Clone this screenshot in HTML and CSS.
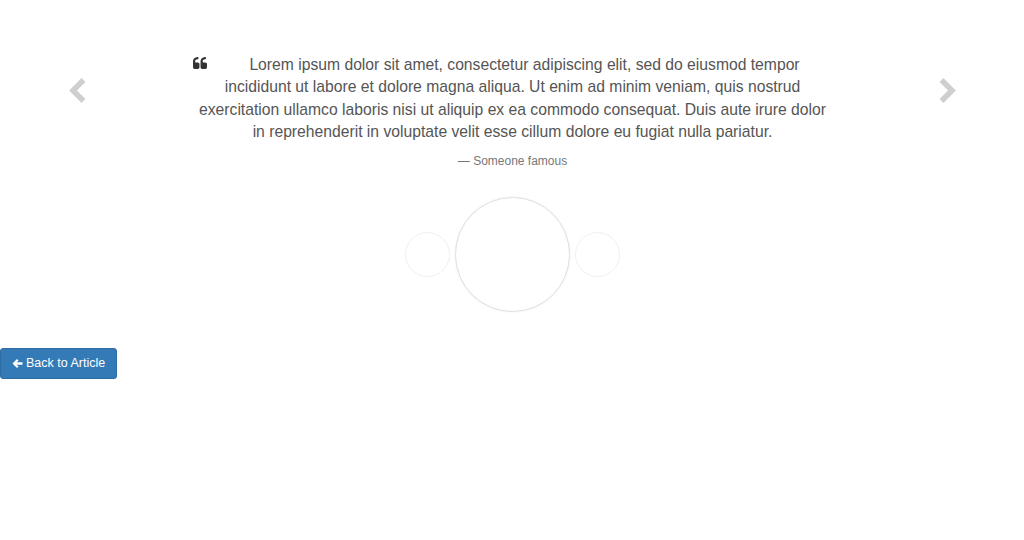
FILE: index.html
```html
<!DOCTYPE html>
<html>
<head>
<meta charset="utf-8">
<link rel="stylesheet" href="styles.css">
</head>
<body>
<section class="carousel">
  <a class="control control-left" href="#">
    <svg width="20" height="26" viewBox="0 0 20 26"><polyline points="15.5,2 5,12.5 15.5,23" fill="none" stroke="#cfcfcf" stroke-width="5.5" stroke-linejoin="miter"/></svg>
  </a>
  <div class="slide">
    <blockquote class="quote">
      <svg class="quote-icon" width="14" height="12" viewBox="0 0 1664 1408"><path fill="#333" d="M768 832v384q0 80-56 136t-136 56h-384q-80 0-136-56t-56-136v-704q0-104 40.5-198.5t109.5-163.5 163.5-109.5 198.5-40.5h64q26 0 45 19t19 45v128q0 26-19 45t-45 19h-64q-106 0-181 75t-75 181v32q0 40 28 68t68 28h224q80 0 136 56t56 136zm896 0v384q0 80-56 136t-136 56h-384q-80 0-136-56t-56-136v-704q0-104 40.5-198.5t109.5-163.5 163.5-109.5 198.5-40.5h64q26 0 45 19t19 45v128q0 26-19 45t-45 19h-64q-106 0-181 75t-75 181v32q0 40 28 68t68 28h224q80 0 136 56t56 136z"/></svg>
      <p class="quote-text">Lorem ipsum dolor sit amet, consectetur adipiscing elit, sed do eiusmod tempor incididunt ut labore et dolore magna aliqua. Ut enim ad minim veniam, quis nostrud exercitation ullamco laboris nisi ut aliquip ex ea commodo consequat. Duis aute irure dolor in reprehenderit in voluptate velit esse cillum dolore eu fugiat nulla pariatur.</p>
      <footer class="author">— Someone famous</footer>
    </blockquote>
    <div class="avatars">
      <span class="avatar avatar-small"></span>
      <span class="avatar avatar-big"></span>
      <span class="avatar avatar-small"></span>
    </div>
  </div>
  <a class="control control-right" href="#">
    <svg width="20" height="26" viewBox="0 0 20 26"><polyline points="4.5,2 15,12.5 4.5,23" fill="none" stroke="#cfcfcf" stroke-width="5.5" stroke-linejoin="miter"/></svg>
  </a>
</section>
<a class="btn-back" href="#">
  <svg class="arrow" width="11" height="11" viewBox="0 0 11 11"><path fill="#fff" d="M0.5 5.5 L5 1 L6.6 2.6 L4.6 4.3 H10.5 V6.7 H4.6 L6.6 8.4 L5 10 Z"/></svg>
  <span>Back to Article</span>
</a>
</body>
</html>
```
FILE: styles.css
```css
html, body {
  margin: 0;
  padding: 0;
  background: #fff;
}
body {
  font-family: "Liberation Sans", Arial, sans-serif;
  color: #555;
}
.carousel {
  display: flex;
  justify-content: space-between;
  align-items: flex-start;
  padding: 53px 67px 0 68px;
}
.control {
  display: block;
  margin-top: 25px;
  width: 20px;
  height: 26px;
}
.control svg {
  display: block;
}
.slide {
  width: 640px;
  display: flex;
  flex-direction: column;
  align-items: center;
}
.quote {
  position: relative;
  margin: 0;
  width: 640px;
  text-align: center;
}
.quote-icon {
  position: absolute;
  left: 0;
  top: 4px;
}
.quote-text {
  margin: 0;
  padding-top: 1px;
  font-size: 15.7px;
  line-height: 22.4px;
  text-indent: 24px;
  color: #555;
}
.author {
  margin-top: 9px;
  font-size: 12px;
  line-height: 17px;
  color: #777;
}
.avatars {
  margin-top: 27px;
  display: flex;
  align-items: center;
  gap: 5px;
}
.avatar {
  display: block;
  border-radius: 50%;
  box-sizing: border-box;
  background: #fff;
}
.avatar-small {
  width: 45px;
  height: 45px;
  border: 1.5px solid #f0f0f0;
}
.avatar-big {
  width: 115px;
  height: 115px;
  border: 1.5px solid #e0e0e0;
  box-shadow: 0 0 2px rgba(0,0,0,0.07);
}
.btn-back {
  display: inline-flex;
  align-items: center;
  gap: 3px;
  margin-top: 36px;
  height: 31px;
  width: 117px;
  box-sizing: border-box;
  padding: 0 0 0 11px;
  background: #337ab7;
  border: 1px solid #2e6da4;
  border-radius: 3px;
  color: #fff;
  font-size: 12.5px;
  white-space: nowrap;
  text-decoration: none;
}
.arrow {
  display: block;
}
```
